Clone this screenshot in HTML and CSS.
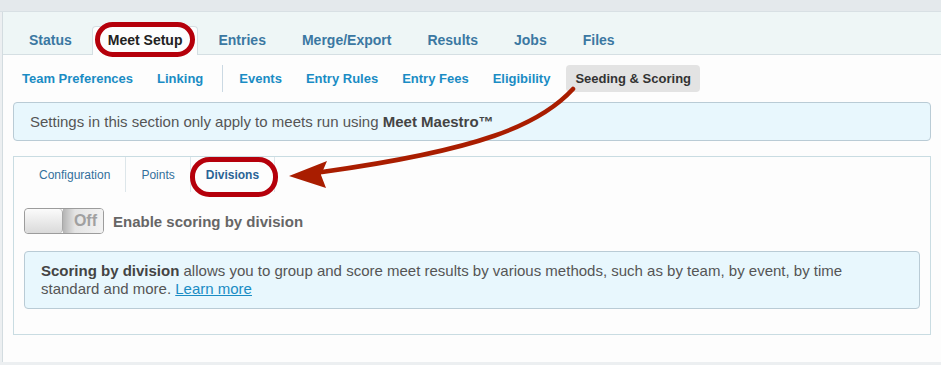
FILE: index.html
```html
<!DOCTYPE html>
<html>
<head>
    <title>Meet Setup - Seeding &amp; Scoring</title>
    <link rel="stylesheet" href="styles.css">
</head>
<body>

<div class="topbar"></div>

<div class="page">
    <!-- Главные вкладки -->
    <nav class="main-tabs">
        <a class="main-tab">Status</a>
        <a class="main-tab active">Meet Setup</a>
        <a class="main-tab">Entries</a>
        <a class="main-tab">Merge/Export</a>
        <a class="main-tab">Results</a>
        <a class="main-tab">Jobs</a>
        <a class="main-tab">Files</a>
    </nav>

    <div class="content">
        <nav class="sub-nav">
            <a class="sub-item">Team Preferences</a>
            <a class="sub-item">Linking</a>
            <span class="sub-sep"></span>
            <a class="sub-item">Events</a>
            <a class="sub-item">Entry Rules</a>
            <a class="sub-item">Entry Fees</a>
            <a class="sub-item">Eligibility</a>
            <a class="sub-item active">Seeding &amp; Scoring</a>
        </nav>

        <div class="notice">
            Settings in this section only apply to meets run using <strong>Meet Maestro&trade;</strong>
        </div>

        <div class="panel">
            <div class="panel-tabs">
                <a class="panel-tab">Configuration</a>
                <a class="panel-tab">Points</a>
                <a class="panel-tab active">Divisions</a>
            </div>
            <div class="panel-body">
                <div class="toggle-row">
                    <span class="toggle">
                        <span class="toggle-knob"></span>
                        <span class="toggle-off">Off</span>
                    </span>
                    <span class="toggle-label">Enable scoring by division</span>
                </div>
                <div class="notice notice-body">
                    <strong>Scoring by division</strong> allows you to group and score meet results by various methods, such as by team, by event, by time standard and more. <a class="link" href="#">Learn more</a>
                </div>
            </div>
        </div>
    </div>
</div>

<!-- Пометки поверх страницы -->
<svg class="annotations" width="941" height="365" viewBox="0 0 941 365">
    <rect x="97.5" y="24.5" width="95" height="30" rx="15" fill="none" stroke="#b5000b" stroke-width="5"/>
    <rect x="192.5" y="159.5" width="83" height="35" rx="17" fill="none" stroke="#b5000b" stroke-width="5"/>
    <path d="M573 89 C540 125, 480 150, 322 172" fill="none" stroke="#a91d00" stroke-width="4.5" stroke-linecap="round"/>
    <polygon points="289,176 327,161 321,175 326,188" fill="#a91d00"/>
</svg>

</body>
</html>
```

FILE: styles.css
```css
body {
    margin: 0;
    font-family: "Liberation Sans", Arial, sans-serif;
    background: #eceff1;
    position: relative;
    height: 365px;
    overflow: hidden;
}
.topbar {
    height: 11px;
    background: #e4e9ec;
    border-bottom: 1px solid #d8e0e4;
}
.page {
    margin-left: 2px;
    border-left: 1px solid #d3dce0;
    background: #fdfdfd;
    height: 350px;
}

/* главные вкладки */
.main-tabs {
    display: flex;
    align-items: flex-end;
    gap: 4px;
    height: 42px;
    padding-left: 10px;
    background: #eef6f6;
    border-bottom: 1px solid #d5dfe3;
}
.main-tab {
    padding: 0 15px;
    height: 28px;
    line-height: 26px;
    font-size: 14px;
    font-weight: bold;
    color: #3b78a2;
    border: 1px solid transparent;
    border-bottom: none;
    border-radius: 4px 4px 0 0;
    margin-bottom: -1px;
}
.main-tab.active {
    background: #fdfdfd;
    border-color: #d5dfe3;
    color: #222;
}

.content {
    padding: 0 10px;
}

/* подменю */
.sub-nav {
    display: flex;
    align-items: center;
    gap: 6px;
    height: 47px;
}
.sub-item {
    padding: 0 9px;
    height: 27px;
    line-height: 27px;
    font-size: 13px;
    font-weight: bold;
    color: #1a8cc4;
    border-radius: 4px;
}
.sub-item.active {
    background: #e3e3e3;
    color: #333;
    margin-left: 1px;
}
.sub-sep {
    width: 1px;
    height: 27px;
    background: #cbd9e3;
    margin: 0 1px 0 4px;
}

.notice {
    background: #e8f7fd;
    border: 1px solid #b9cbd5;
    border-radius: 4px;
    padding: 9px 16px;
    line-height: 19px;
    font-size: 15px;
    color: #555;
}
.notice strong { color: #444; }

.panel {
    margin-top: 15px;
    border: 1px solid #c9dce2;
}
.panel-tabs {
    display: flex;
    padding-left: 10px;
    height: 35px;
}
.panel-tab {
    padding: 0 15px;
    line-height: 36px;
    font-size: 12px;
    color: #33709c;
    border-right: 1px solid #dde6ea;
}
.panel-tab.active {
    font-weight: bold;
    color: #2a6496;
}
.panel-body {
    padding: 16px 10px 25px;
}

/* переключатель */
.toggle-row {
    display: flex;
    align-items: center;
}
.toggle {
    display: flex;
    width: 78px;
    height: 24px;
    border: 1px solid #9c9c9c;
    border-radius: 4px;
    overflow: hidden;
}
.toggle-knob {
    width: 37px;
    background: linear-gradient(#fbfbfb, #dadada);
    border-right: 1px solid #a8a8a8;
    border-radius: 4px;
}
.toggle-off {
    flex: 1;
    text-align: right;
    padding-right: 6px;
    line-height: 24px;
    font-size: 16px;
    font-weight: bold;
    color: #a0a0a0;
    background: linear-gradient(to right, #b4b4b4, #e4e4e4 30%, #f2f2f2);
}
.toggle-label {
    margin-left: 9px;
    font-size: 15px;
    font-weight: bold;
    color: #666;
}

.notice-body {
    margin-top: 17px;
    padding: 10px 16px;
    line-height: 18px;
}
.link {
    color: #1a8cc4;
    text-decoration: underline;
}

.annotations {
    position: absolute;
    top: 0;
    left: 0;
    pointer-events: none;
}
```
